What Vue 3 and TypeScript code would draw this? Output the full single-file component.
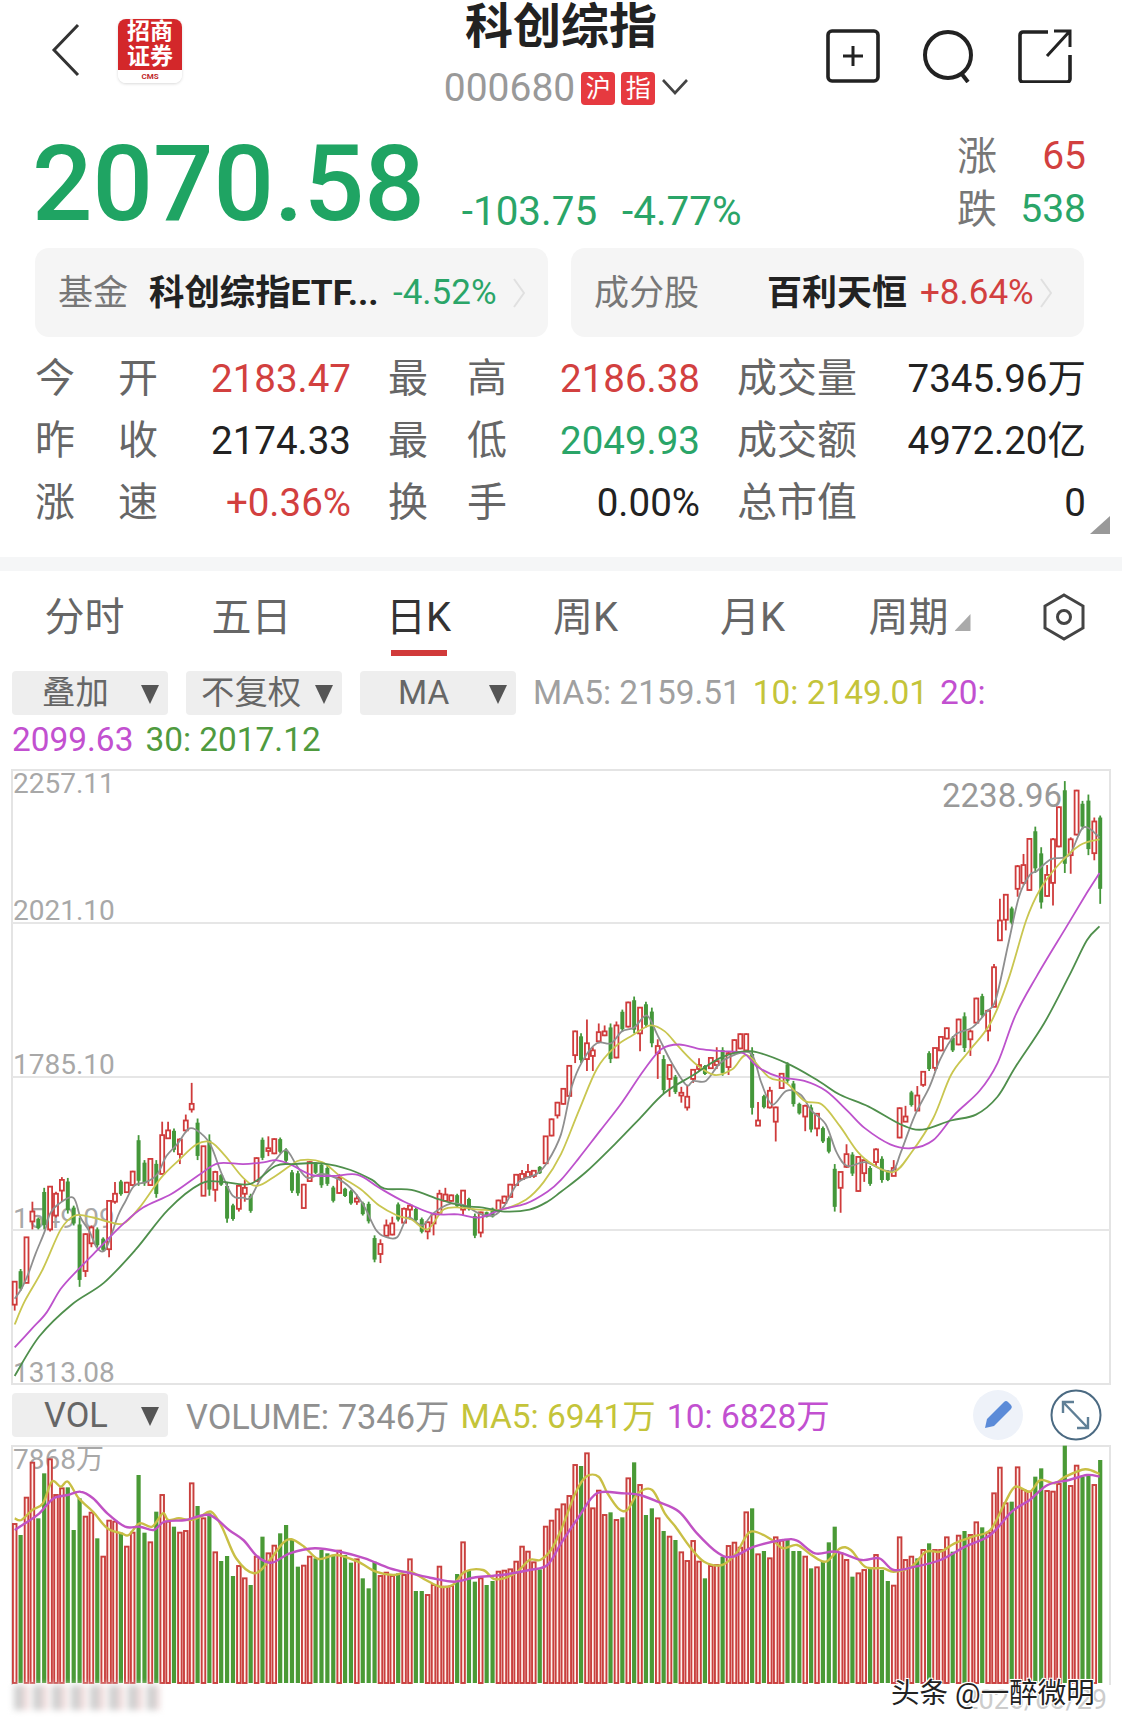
<template>
  <div class="page">
    <header class="top">
      <div class="top-left">
        <svg class="back" width="30" height="54" viewBox="0 0 30 54">
          <polyline points="27,2 3,27 27,52" fill="none" stroke="#333" stroke-width="3" />
        </svg>
        <div class="logo">
          <div class="logo-red">招商<br />证券</div>
          <div class="logo-cms">CMS</div>
        </div>
      </div>
      <div class="top-mid">
        <h1 class="title">科创综指</h1>
        <div class="code-row">
          <span class="code">000680</span>
          <span class="tag">沪</span>
          <span class="tag">指</span>
          <svg width="26" height="16" viewBox="0 0 26 16">
            <polyline points="1,1 13,14 25,1" fill="none" stroke="#444" stroke-width="2.6" />
          </svg>
        </div>
      </div>
      <div class="top-right">
        <svg width="54" height="54" viewBox="0 0 54 54">
          <rect x="2" y="2" width="50" height="50" rx="4" fill="none" stroke="#222" stroke-width="3.6" />
          <path d="M27 17v20M17 27h20" stroke="#222" stroke-width="3" />
        </svg>
        <svg width="54" height="54" viewBox="0 0 54 54">
          <circle cx="26" cy="26" r="23" fill="none" stroke="#222" stroke-width="4" />
          <path d="M39 44l7 9" stroke="#222" stroke-width="4" />
        </svg>
        <svg width="54" height="54" viewBox="0 0 54 54">
          <path d="M30 3H5a3 3 0 0 0-3 3v44a3 3 0 0 0 3 3h44a3 3 0 0 0 3-3V26" fill="none" stroke="#222" stroke-width="3.6" />
          <path d="M29 27L51 3M36 2h16v16" fill="none" stroke="#222" stroke-width="3" />
        </svg>
      </div>
    </header>

    <section class="quote">
      <div class="price">2070.58</div>
      <div class="change"><span>-103.75</span><span>-4.77%</span></div>
      <div class="breadth">
        <div class="breadth-row"><span class="b-label">涨</span><span class="up">65</span></div>
        <div class="breadth-row"><span class="b-label">跌</span><span class="down">538</span></div>
      </div>
    </section>

    <section class="chips">
      <div class="chip">
        <span class="chip-label">基金</span>
        <span class="chip-name n1">科创综指ETF...</span>
        <span class="chip-pct down">-4.52%</span>
        <svg class="chip-arrow" width="12" height="30" viewBox="0 0 12 30">
          <polyline points="1,1 11,15 1,29" fill="none" stroke="#e0e0e0" stroke-width="2" />
        </svg>
      </div>
      <div class="chip">
        <span class="chip-label">成分股</span>
        <span class="chip-name n2">百利天恒</span>
        <span class="chip-pct up">+8.64%</span>
        <svg class="chip-arrow" width="12" height="30" viewBox="0 0 12 30">
          <polyline points="1,1 11,15 1,29" fill="none" stroke="#e0e0e0" stroke-width="2" />
        </svg>
      </div>
    </section>

    <section class="stats">
      <template v-for="(cell, i) in stats" :key="i">
        <div class="stat-label" :class="{ pad: i % 3 !== 0 }">
          <span v-for="(ch, j) in cell.label" :key="j">{{ ch }}</span>
        </div>
        <div class="stat-value" :class="cell.tone">{{ cell.value }}</div>
      </template>
      <i class="corner"></i>
    </section>

    <div class="band"></div>

    <nav class="tabs">
      <div v-for="t in tabs" :key="t" class="tab" :class="{ active: t === '日K' }">
        <span>{{ t }}<i v-if="t === '周期'" class="tab-tri"></i></span>
        <b></b>
      </div>
      <svg class="hex" width="44" height="48" viewBox="0 0 44 48">
        <polygon points="22,2 41,13 41,35 22,46 3,35 3,13" fill="none" stroke="#444" stroke-width="3" />
        <circle cx="22" cy="24" r="6.5" fill="none" stroke="#444" stroke-width="3" />
      </svg>
    </nav>

    <div class="controls">
      <div class="select"><span>叠加</span><i></i></div>
      <div class="select"><span>不复权</span><i></i></div>
      <div class="select"><span>MA</span><i></i></div>
      <span class="c-grey">MA5: 2159.51</span>
      <span class="c-yellow">10: 2149.01</span>
      <span class="c-purple">20:</span>
      <span class="c-purple">2099.63</span>
      <span class="c-green">30: 2017.12</span>
    </div>

    <svg class="chart" width="1122" height="616" viewBox="0 769 1122 616">
      <rect x="12" y="770" width="1098" height="614" fill="none" stroke="#e4e4e4" stroke-width="2" />
      <path d="M12 923H1110M12 1077H1110M12 1230H1110" stroke="#e6e6e6" stroke-width="2" />
      <g class="axis">
        <text x="13" y="793">2257.11</text>
        <text x="13" y="920">2021.10</text>
        <text x="13" y="1074">1785.10</text>
        <text x="13" y="1228">1549.09</text>
        <text x="13" y="1382">1313.08</text>
        <text x="942" y="807" class="max">2238.96</text>
      </g>
      <g v-for="(c, i) in candleShapes" :key="i">
        <line :x1="c.x" :x2="c.x" :y1="c.hi" :y2="c.lo" :stroke="c.up ? '#cf3b3b' : '#44973a'" stroke-width="1.8" />
        <rect v-if="c.up" :x="c.x - 2" :y="c.top" width="4" :height="c.h" fill="#fff" stroke="#cf3b3b" stroke-width="1.8" />
        <rect v-else :x="c.x - 2" :y="c.top" width="4" :height="c.h" fill="#44973a" />
      </g>
      <path :d="priceLines.ma5" class="ln" stroke="#8f8f8f" />
      <path :d="priceLines.ma10" class="ln" stroke="#c9c650" />
      <path :d="priceLines.ma20" class="ln" stroke="#bd52cc" />
      <path :d="priceLines.ma30" class="ln" stroke="#4f8f4c" />
    </svg>

    <div class="vol-row">
      <div class="select"><span>VOL</span><i></i></div>
      <span class="c-grey vol-first">VOLUME: 7346万</span>
      <span class="c-yellow vol-ma">MA5: 6941万</span>
      <span class="c-purple vol-ma">10: 6828万</span>
      <div class="vol-icons">
        <svg width="50" height="50" viewBox="0 0 50 50">
          <circle cx="25" cy="25" r="25" fill="#eef2f9" />
          <path d="M12 38l2-9 17-17a3 3 0 0 1 4 0l3 3a3 3 0 0 1 0 4L21 36z" fill="#5b8bd8" />
        </svg>
        <svg width="52" height="52" viewBox="0 0 52 52">
          <circle cx="26" cy="26" r="24.5" fill="none" stroke="#4b6a82" stroke-width="2" />
          <path d="M13 13l25 26M13 24V13h11M38 28v11H27" fill="none" stroke="#5f7f96" stroke-width="2.4" />
        </svg>
      </div>
    </div>

    <svg class="chart" width="1122" height="240" viewBox="0 1445 1122 240">
      <path d="M12 1685V1446H1110V1685" fill="none" stroke="#e4e4e4" stroke-width="2" />
      <text x="13" y="1469" class="axis-text">7868万</text>
      <g v-for="(b, i) in volShapes" :key="i">
        <rect v-if="b.up" :x="b.x - 1.8" :y="b.top" width="3.6" :height="b.h" fill="#fff0ec" stroke="#c93f3d" stroke-width="1.9" />
        <rect v-else :x="b.x - 2.1" :y="b.top" width="4.2" :height="b.h" fill="#4a9a36" />
      </g>
      <path :d="volLines.ma5" class="ln thick" stroke="#c9bf45" />
      <path :d="volLines.ma10" class="ln thick" stroke="#c052c4" />
    </svg>

    <footer class="foot">
      <div class="smudge"></div>
      <span class="date">2026/03/29</span>
      <span class="mark">头条 @一醉微明</span>
    </footer>
  </div>
</template>

<script setup lang="ts">
type Candle = [number, number, number, number?, number?]
type Pt = [number, number]

const tabs = ['分时', '五日', '日K', '周K', '月K', '周期']

const stats = [
  { label: '今开', value: '2183.47', tone: 'up' },
  { label: '最高', value: '2186.38', tone: 'up' },
  { label: '成交量', value: '7345.96万', tone: 'dark' },
  { label: '昨收', value: '2174.33', tone: 'dark' },
  { label: '最低', value: '2049.93', tone: 'down' },
  { label: '成交额', value: '4972.20亿', tone: 'dark' },
  { label: '涨速', value: '+0.36%', tone: 'up' },
  { label: '换手', value: '0.00%', tone: 'dark' },
  { label: '总市值', value: '0', tone: 'dark' }
]

// values were read off the crops, so they are in crop units: x / 2.795, y / 2.525 + 770
const candles: Candle[] = [
  [1,1292,1365,1292,1350],[0,1260,1315],[1,1180,1295,1180,1295],[1,1090,1160,1115,1140],[0,1130,1160],[0,1055,1160],[1,1052,1165,1052,1160],[1,1065,1130,1070,1125],
  [1,1028,1090,1035,1062],[0,1030,1120],[0,1100,1150],[0,1130,1305],[1,1170,1280,1172,1265],[1,1150,1205,1155,1195],[0,1155,1205],[0,1180,1215],[1,1088,1230,1088,1210],[1,1040,1095,1070,1090],
  [0,1035,1075],[1,1040,1068,1042,1066],[1,1012,1050,1014,1048],[0,922,1050],[0,985,1050],[1,980,1050,982,1048],[0,985,1080],[1,888,1020,922,1020],[1,888,932,910,930],[0,905,965],
  [1,930,995,933,970],[1,870,915,885,910],[1,790,865,843,857],[0,880,985],[1,950,1075,950,1075],[0,920,1075],[1,1012,1090,1015,1060],[0,1020,1050],[0,1040,1143],[0,1095,1138],
  [1,1050,1115,1050,1108],[1,1035,1090,1055,1070],[0,1070,1118],[1,978,1040,980,1038],[0,928,985],[1,925,975,955,962],[1,930,970,932,968],[0,928,968],[0,955,990],[0,1010,1068],
  [0,1012,1075],[1,1045,1108,1047,1106],[1,988,1040,990,1038],[0,990,1020],[0,990,1055],[0,1000,1050],[0,1050,1092],[1,1020,1070,1030,1068],[0,1055,1078],[0,1060,1098],
  [1,1072,1098,1082,1090],[0,1090,1125],[0,1090,1145],[0,1175,1243],[1,1185,1245,1197,1222],[1,1135,1178,1150,1176],[1,1128,1175,1145,1173],[0,1092,1140],[1,1105,1145,1108,1143],[1,1095,1135,1100,1110],
  [0,1105,1140],[0,1130,1170],[1,1140,1185,1142,1165],[1,1120,1175,1122,1145],[1,1060,1120,1070,1118],[1,1055,1090,1072,1088],[1,1072,1090,1074,1088],[0,1070,1105],[1,1062,1125,1062,1110],[0,1080,1112],
  [0,1120,1182],[1,1115,1180,1117,1168],[0,1115,1130],[0,1105,1130],[1,1085,1115,1087,1113],[1,1075,1095,1077,1093],[1,1045,1080,1047,1078],[1,1020,1050,1022,1048],[1,1010,1035,1020,1033],[1,995,1030,1015,1028],
  [1,1010,1030,1012,1025],[0,1000,1020],[1,925,995,925,993],[1,880,925,882,923],[1,838,880,840,872],
  [1,805,845,805,843],[1,745,825,747,823],[1,658,740,660,720],[0,665,740],[1,630,760,690,730],[1,700,760,708,722],[1,640,690,662,685],[1,645,672,660,670],[0,640,740],[1,635,728,645,726],
  [0,605,660],[1,585,650,587,648],[0,572,665],[1,600,710,600,665],[0,585,650],[0,600,700],[1,680,780,697,715],[0,720,818],[1,745,825,745,780],[0,770,818],[1,800,840,815,822],[1,795,860,825,852],
  [1,755,790,757,780],[1,728,760,745,755],[0,745,770],[1,725,755,727,753],[1,700,755,735,745],[0,700,772],[1,710,770,715,750],[1,680,715,682,713],[1,665,705,667,703],[1,665,710,667,708],
  [0,700,870],[1,838,898,885,898],[0,820,855],[1,800,855,810,852],[1,850,938,852,888],[1,765,805,767,803],[0,738,790],[0,785,850],[0,840,870],[1,845,912,848,875],[0,845,915],[1,868,925,868,905],
  [0,900,942],[0,925,968],[0,995,1115],[1,1015,1118,1015,1055],[1,945,1005,970,1002],[0,965,1025],[1,975,1065,977,1063],[1,985,1040,985,1018],[0,1000,1050],[1,955,1000,958,990],[0,975,1042],[0,1010,1038],
  [1,985,1025,1005,1025],[1,852,930,854,928],[1,848,888,875,888],[0,810,850],[1,798,860,822,860],[1,760,800,762,795],[0,710,760],[1,702,760,702,752],[1,672,710,674,708],[1,650,680,652,678],[0,672,712],[1,628,695,630,693],
  [0,612,712],[1,655,722,660,680],[1,575,640,577,638],[0,565,625],[1,605,685,608,658],[1,490,598,498,598],[1,325,430,380,430],[1,313,405,315,378],[0,345,390],[1,240,320,243,300],[1,212,290,240,285],[1,172,305,174,303],
  [0,143,260],[0,195,350],[1,240,320,265,318],[1,172,342,175,285],[1,92,195,94,193],[0,28,260],[1,170,262,175,215],[1,50,165,52,163],[0,78,150],[0,62,215],[1,120,228,130,210],[0,115,338,120,300]
]

// positive = red bar, negative = green bar, value = top of the bar in crop units
const vols = [
  432,-465,353,248,-415,-280,238,345,325,-322,-450,-355,410,398,-475,530,422,425,-458,500,458,-285,-458,487,-395,345,425,-440,458,453,310,-378,415,-400,517,-543,-528,-588,558,595,-615,530,-470,520,497,-460,-435,-480,-560,557,530,-535,-510,-520,-525,512,-525,-548,538,-595,-625,-545,588,578,588,-580,585,538,-633,-633,645,615,560,620,618,-582,487,-572,-605,595,-615,-603,575,572,568,545,500,515,547,-568,440,422,388,
  373,348,255,-258,220,385,332,405,-397,420,-412,295,-247,315,-405,-385,415,-453,470,-480,517,543,483,545,-595,558,555,-530,498,488,503,397,-385,523,-513,535,472,482,-480,-513,-513,530,-565,562,-545,-487,-440,520,540,-590,580,570,-562,525,-570,-603,617,472,540,530,-535,510,-490,510,510,472,-515,467,-453,465,427,-442,458,340,263,370,-365,262,330,335,-290,-265,333,335,312,-197,318,257,-290,-283,315,-240
]

const RIGHT = 1568 // right crop starts here in crop units

const join = (left: number[], right: number[]): Pt[] => {
  const out: Pt[] = []
  for (let i = 0; i < left.length; i += 2) out.push([left[i], left[i + 1]])
  for (let i = 0; i < right.length; i += 2) out.push([right[i] + RIGHT, right[i + 1]])
  return out
}

// catmull-rom through the points, as cubic segments
const smooth = (pts: Pt[]) => {
  let d = `M${pts[0][0].toFixed(1)} ${pts[0][1].toFixed(1)}`
  for (let i = 0; i < pts.length - 1; i++) {
    const p0 = pts[Math.max(i - 1, 0)]
    const p1 = pts[i]
    const p2 = pts[i + 1]
    const p3 = pts[Math.min(i + 2, pts.length - 1)]
    const c1x = p1[0] + (p2[0] - p0[0]) / 6
    const c1y = p1[1] + (p2[1] - p0[1]) / 6
    const c2x = p2[0] - (p3[0] - p1[0]) / 6
    const c2y = p2[1] - (p3[1] - p1[1]) / 6
    d += `C${c1x.toFixed(1)} ${c1y.toFixed(1)} ${c2x.toFixed(1)} ${c2y.toFixed(1)} ${p2[0].toFixed(1)} ${p2[1].toFixed(1)}`
  }
  return d
}

const px = (x: number) => x / 2.795
const py = (y: number) => 770 + y / 2.525
const vy = (y: number) => 1380 + y / 3

const toPrice = (pts: Pt[]) => smooth(pts.map(([x, y]): Pt => [px(x), py(y)]))
const toVol = (pts: Pt[]) => smooth(pts.map(([x, y]): Pt => [px(x), vy(y)]))

const priceLines = {
  ma5: toPrice(join(
    [41,1335,60,1310,80,1270,100,1220,125,1165,140,1120,165,1095,205,1080,225,1130,250,1165,270,1205,290,1215,305,1190,330,1125,350,1090,375,1050,410,1040,440,1020,465,975,495,945,530,905,565,920,590,950,620,1020,650,1075,680,1080,700,1080,730,1030,770,985,800,960,830,1000,860,1030,900,1020,950,1035,990,1065,1020,1105,1050,1160,1075,1178,1110,1180,1140,1130,1180,1150,1210,1120,1260,1095,1300,1100,1340,1120,1380,1125,1410,1100,1450,1040,1500,1020,1530,990],
    [0,920,30,800,60,735,100,690,140,690,170,660,205,650,240,620,270,670,310,740,350,795,370,785,405,785,440,745,470,725,530,715,560,790,590,845,630,810,670,820,700,860,740,895,770,965,800,1000,850,990,900,1010,930,1010,950,965,990,870,1030,800,1060,730,1100,670,1150,650,1190,610,1215,580,1250,440,1280,320,1310,265,1330,255,1370,225,1420,215,1460,145,1505,170]
  )),
  ma10: toPrice(join(
    [41,1400,70,1340,120,1260,170,1160,210,1125,260,1130,300,1140,345,1145,390,1105,450,1030,500,985,550,945,590,940,630,975,680,1030,720,1050,770,1025,810,1000,840,985,900,990,950,1025,1010,1060,1060,1100,1110,1125,1150,1135,1195,1160,1240,1110,1290,1105,1340,1110,1400,1110,1470,1085,1520,1040],
    [0,970,50,860,100,755,150,700,200,670,250,645,290,660,330,700,380,745,430,770,480,755,520,720,580,775,630,790,680,835,730,845,780,900,830,965,870,995,930,1015,980,965,1040,880,1090,770,1140,710,1200,640,1250,530,1300,380,1340,300,1390,240,1450,190,1505,175]
  )),
  ma20: toPrice(join(
    [41,1458,90,1410,130,1370,170,1310,220,1260,280,1205,340,1150,400,1105,480,1070,560,1020,610,993,680,995,740,990,770,985,810,995,870,1022,930,1025,1000,1022,1060,1055,1130,1090,1210,1120,1280,1122,1340,1130,1400,1110,1470,1095,1530,1065],
    [0,1035,50,980,110,910,170,840,230,760,280,705,330,693,390,705,450,710,510,715,550,750,610,775,680,785,740,810,800,860,850,905,920,945,980,955,1040,935,1100,870,1170,810,1220,740,1270,620,1330,520,1410,400,1470,310,1505,260]
  )),
  ma30: toPrice(join(
    [41,1530,110,1430,200,1350,290,1295,380,1210,470,1110,560,1045,620,1040,700,1045,770,1000,820,995,900,993,980,1010,1040,1035,1075,1057,1150,1060,1230,1085,1290,1100,1350,1105,1410,1115,1480,1110,1530,1090],
    [0,1065,70,1015,150,945,220,880,290,815,370,770,450,725,530,710,630,740,720,785,780,820,860,850,950,895,1010,908,1090,885,1160,870,1220,825,1270,750,1350,640,1420,520,1470,430,1505,395]
  ))
}

const volLines = {
  ma5: toVol(join(
    [41,415,60,420,90,390,120,370,145,305,170,320,190,305,220,355,260,395,300,445,340,460,360,465,390,430,425,440,455,400,470,420,500,415,530,420,560,410,590,395,620,440,660,535,710,580,750,545,790,490,815,478,850,500,890,537,940,525,1000,545,1050,575,1100,585,1145,575,1190,600,1230,620,1265,615,1300,575,1350,570,1385,598,1440,580,1480,540,1510,540,1540,510],
    [0,450,40,340,70,290,105,290,130,340,160,385,185,390,215,340,255,330,290,400,320,440,360,500,400,545,450,555,490,520,530,455,590,480,620,505,660,495,700,525,740,545,780,505,810,510,850,560,900,565,930,575,980,560,1020,515,1060,515,1100,490,1150,470,1200,450,1240,370,1270,320,1310,335,1340,300,1380,310,1410,290,1465,268,1505,282]
  )),
  ma10: toVol(join(
    [41,450,70,430,110,400,150,355,190,345,225,335,260,355,300,400,350,440,390,440,430,450,460,425,520,420,585,405,640,450,680,480,720,530,760,548,810,520,880,505,950,515,1020,535,1090,565,1150,580,1210,595,1270,605,1330,592,1400,585,1480,570,1530,555],
    [0,490,50,410,100,340,170,340,220,345,270,365,330,395,380,460,440,520,480,530,540,500,620,480,660,482,710,520,770,515,840,540,890,535,930,570,990,560,1060,540,1130,500,1200,465,1260,395,1310,360,1360,315,1420,300,1470,285,1505,290]
  ))
}

const X0 = 14.7
const X1 = 1100.2

const candleShapes = candles.map((c, i) => {
  const [up, hi, lo] = c
  const bt = c[3] ?? hi + (lo - hi) * 0.1
  const bb = c[4] ?? lo - (lo - hi) * 0.1
  return {
    x: X0 + ((X1 - X0) * i) / (candles.length - 1),
    up: up === 1,
    hi: py(hi),
    lo: py(lo),
    top: py(bt),
    h: py(bb) - py(bt)
  }
})

const volShapes = vols.map((v, i) => {
  const top = vy(Math.abs(v))
  return {
    x: X0 + ((X1 - X0) * i) / (vols.length - 1),
    up: v > 0,
    top,
    h: 1683 - top
  }
})
</script>

<style>
html,
body {
  margin: 0;
  background: #fff;
}
</style>

<style scoped>
.page {
  position: relative;
  width: 1122px;
  height: 1731px;
  overflow: hidden;
  background: #fff;
  font-family: Roboto, "Noto Sans CJK SC", sans-serif;
  color: #333;
}

.top {
  display: grid;
  grid-template-columns: 1fr auto 1fr;
  height: 115px;
}

.top-left {
  display: flex;
  align-items: flex-start;
  padding: 19px 0 0 51px;
}

.back {
  margin-top: 4px;
}

.logo {
  width: 64px;
  height: 64px;
  margin-left: 37px;
  border-radius: 8px;
  overflow: hidden;
  box-shadow: 0 1px 3px rgba(0, 0, 0, 0.15);
}

.logo-red {
  height: 51px;
  box-sizing: border-box;
  background: #d3272a;
  color: #fff;
  font-size: 23px;
  font-weight: 700;
  line-height: 25px;
  text-align: center;
}

.logo-cms {
  height: 13px;
  font-size: 8px;
  font-weight: 700;
  line-height: 13px;
  text-align: center;
  color: #c0292b;
  background: #fff;
}

.top-mid {
  display: flex;
  flex-direction: column;
  align-items: center;
}

.title {
  margin: 0;
  font-size: 48px;
  font-weight: 700;
  line-height: 54px;
  color: #222;
}

.code-row {
  display: flex;
  align-items: center;
  gap: 6px;
  margin: 16px 0 0 10px;
  height: 36px;
}

.code {
  font-size: 39px;
  color: #999;
}

.tag {
  width: 34px;
  height: 33px;
  border-radius: 4px;
  background: #e63a40;
  color: #fff;
  font-size: 25px;
  line-height: 33px;
  text-align: center;
}

.code-row svg {
  margin-left: 1px;
  margin-top: -3px;
}

.top-right {
  display: flex;
  justify-content: flex-end;
  gap: 42px;
  padding: 29px 50px 0 0;
}

.quote {
  display: flex;
  height: 133px;
  padding-left: 32px;
}

.price {
  margin-top: 10px;
  font-size: 106.5px;
  font-weight: 500;
  line-height: 118px;
  color: #1fa463;
}

.change {
  display: flex;
  gap: 25px;
  margin: 74px 0 0 37px;
  font-size: 40.4px;
  line-height: 46px;
  color: #2aa568;
}

.breadth {
  margin-left: auto;
  padding: 15px 36px 0 0;
}

.breadth-row {
  display: flex;
  justify-content: space-between;
  width: 129px;
  height: 53px;
  font-size: 39px;
  line-height: 53px;
}

.b-label {
  color: #777;
  font-size: 40px;
}

.up {
  color: #d2403f;
}

.down {
  color: #2aa568;
}

.dark {
  color: #222;
}

.chips {
  display: flex;
  gap: 23px;
  padding-left: 35px;
}

.chip {
  display: flex;
  align-items: center;
  width: 513px;
  height: 89px;
  border-radius: 14px;
  background: #f5f5f5;
  font-size: 35px;
  padding-left: 23px;
  box-sizing: border-box;
}

.chip-label {
  color: #777;
  margin-top: -6px;
}

.chip-name {
  font-weight: 700;
  color: #222;
  white-space: nowrap;
  margin-top: -6px;
}

.n1 {
  margin-left: 21px;
  width: 232px;
  font-size: 35.4px;
}

.n2 {
  margin-left: 68px;
  width: 141px;
}

.chip-pct {
  margin-left: 12px;
  width: 118px;
}

.chip-arrow {
  margin-left: 2px;
}

.stats {
  position: relative;
  display: grid;
  grid-template-columns: 123px 193px 156px 193px 157px 229px;
  grid-auto-rows: 62px;
  margin-top: 11px;
  padding-left: 35px;
  font-size: 38.5px;
  line-height: 62px;
}

.stat-label {
  display: flex;
  justify-content: space-between;
  color: #666;
  font-size: 40px;
}

.stat-label.pad {
  padding-left: 37px;
}

.stat-value {
  text-align: right;
  white-space: nowrap;
}

.corner {
  position: absolute;
  right: 12px;
  top: 168px;
  width: 20px;
  height: 18px;
  background: #999;
  clip-path: polygon(100% 0, 100% 100%, 0 100%);
}

.band {
  height: 14px;
  margin-top: 23px;
  background: #f5f6f7;
}

.tabs {
  display: flex;
  align-items: flex-start;
  height: 89px;
  padding: 22px 36px 0 1px;
  box-sizing: border-box;
}

.tab {
  display: flex;
  flex-direction: column;
  align-items: center;
  width: 167px;
  font-size: 40px;
  color: #666;
}

.tab span {
  height: 50px;
  line-height: 50px;
  white-space: nowrap;
}

.tab b {
  width: 56px;
  height: 6px;
  margin-top: 7px;
}

.tab.active span {
  color: #333;
}

.tab.active b {
  background: #d13a3a;
}

.tab-tri {
  display: inline-block;
  width: 16px;
  height: 17px;
  margin-left: 6px;
  background: #aaa;
  clip-path: polygon(100% 0, 100% 100%, 0 100%);
}

.hex {
  margin: 0 0 0 auto;
}

.controls {
  display: flex;
  flex-wrap: wrap;
  align-items: center;
  gap: 3px 12px;
  margin-top: 11px;
  padding: 0 100px 0 12px;
  font-size: 33.4px;
  line-height: 44px;
  height: 98px;
  align-content: flex-start;
}

.select {
  position: relative;
  display: flex;
  align-items: center;
  justify-content: flex-start;
  width: 156px;
  height: 44px;
  margin-right: 6px;
  padding-left: 30px;
  box-sizing: border-box;
  background: #eee;
  border-radius: 4px;
  color: #666;
}

.select i {
  position: absolute;
  right: 9px;
  top: 14px;
  width: 0;
  height: 0;
  border-left: 9px solid transparent;
  border-right: 9px solid transparent;
  border-top: 19px solid #555;
}

.controls .select:nth-child(2) {
  padding-left: 15px;
}

.controls .select:nth-child(3) {
  padding-left: 38px;
  margin-right: 5px;
}

.c-grey {
  color: #a0a0a0;
}

.c-yellow {
  color: #c4c43a;
}

.c-purple {
  color: #c250d0;
}

.c-green {
  color: #4f9a3e;
}

.chart {
  display: block;
  overflow: visible;
}

.axis text,
.axis-text {
  font-size: 28px;
  fill: #a8a8a8;
}

.axis .max {
  font-size: 33px;
  fill: #999;
}

.ln {
  fill: none;
  stroke-width: 1.8;
}

.ln.thick {
  stroke-width: 2.4;
}

.vol-row {
  display: flex;
  align-items: center;
  gap: 11px;
  height: 60px;
  padding-left: 12px;
  font-size: 34.4px;
}

.vol-row .select {
  margin-right: 0;
  padding-left: 32px;
}

.vol-row > span {
  margin-top: -3px;
}

.vol-first {
  margin-left: 7px;
  color: #909090;
}

.vol-ma {
  font-size: 33.5px;
}

.vol-icons {
  display: flex;
  align-items: center;
  gap: 27px;
  margin-left: auto;
  padding-right: 20px;
}

.foot {
  position: relative;
  height: 46px;
}

.smudge {
  width: 146px;
  height: 25px;
  margin-left: 14px;
  background: repeating-linear-gradient(90deg, #cfcfcf 0, #cfcfcf 9px, #f2dede 9px, #f2dede 15px, #fff 15px, #fff 19px);
  filter: blur(3px);
}

.date {
  position: absolute;
  right: 15px;
  top: 0;
  font-size: 27px;
  line-height: 30px;
  color: #ccc;
}

.mark {
  position: absolute;
  left: 891px;
  top: -7px;
  font-size: 28.5px;
  line-height: 32px;
  color: #222;
  white-space: nowrap;
  text-shadow: 0 0 2px #fff, 1px 1px 0 #fff, -1px -1px 0 #fff, 1px -1px 0 #fff, -1px 1px 0 #fff;
}
</style>
